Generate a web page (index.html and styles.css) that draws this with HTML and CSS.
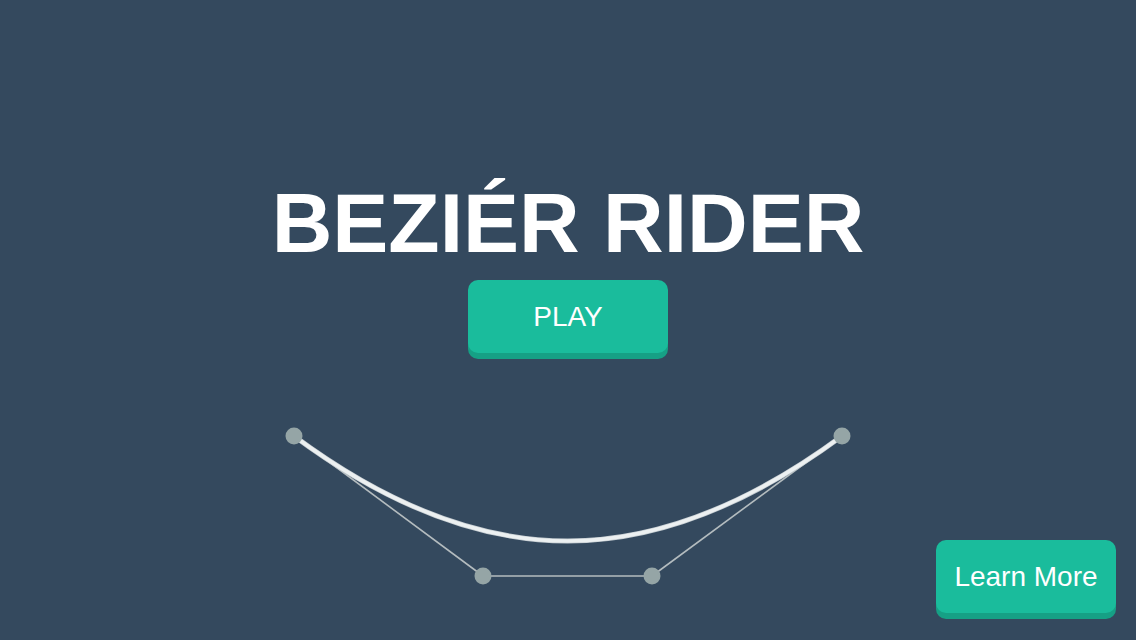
FILE: index.html
```html
<!DOCTYPE html>
<html>
<head>
<meta charset="utf-8">
<link rel="stylesheet" href="styles.css">
</head>
<body>
<main class="screen">
  <h1 class="title">BEZIÉR RIDER</h1>
  <button class="btn btn-play">PLAY</button>
  <svg class="curve" width="1136" height="200" viewBox="0 400 1136 200">
    <line x1="294" y1="436" x2="483" y2="576" class="handle"/>
    <line x1="483" y1="576" x2="652" y2="576" class="handle"/>
    <line x1="652" y1="576" x2="842" y2="436" class="handle"/>
    <path d="M294 436 C483 576 652 576 842 436" class="track-edge"/>
    <path d="M294 436 C483 576 652 576 842 436" class="track"/>
    <circle cx="294" cy="436" r="8.5" class="dot"/>
    <circle cx="483" cy="576" r="8.5" class="dot"/>
    <circle cx="652" cy="576" r="8.5" class="dot"/>
    <circle cx="842" cy="436" r="8.5" class="dot"/>
  </svg>
  <button class="btn btn-learn">Learn More</button>
</main>
</body>
</html>
```
FILE: styles.css
```css
html, body {
  margin: 0;
  padding: 0;
  width: 1136px;
  height: 640px;
  overflow: hidden;
  background: #34495e;
}
.screen {
  position: relative;
  width: 1136px;
  height: 640px;
  display: flex;
  flex-direction: column;
  align-items: center;
  font-family: "Liberation Sans", Arial, sans-serif;
}
.title {
  margin: 181px 0 0;
  font-size: 84px;
  line-height: 84px;
  font-weight: bold;
  color: #ffffff;
  letter-spacing: 0;
}
.btn {
  border: none;
  background: #1abc9c;
  color: #ffffff;
  font-family: "Liberation Sans", Arial, sans-serif;
  font-size: 28px;
  font-weight: normal;
  border-radius: 10px;
  box-shadow: 0 6px 0 #16a085;
  padding: 0;
  cursor: pointer;
}
.btn-play {
  margin-top: 15px;
  width: 200px;
  height: 73px;
}
.curve {
  display: block;
  margin-top: 47px;
}
.handle {
  stroke: #b4bcbf;
  stroke-width: 1.6;
}
.track-edge {
  fill: none;
  stroke: #c3cbd0;
  stroke-width: 5;
  stroke-linecap: round;
}
.track {
  fill: none;
  stroke: #ecf0f1;
  stroke-width: 3.6;
  stroke-linecap: round;
}
.dot {
  fill: #95a5a6;
}
.btn-learn {
  position: absolute;
  right: 20px;
  top: 540px;
  width: 180px;
  height: 73px;
}
```
